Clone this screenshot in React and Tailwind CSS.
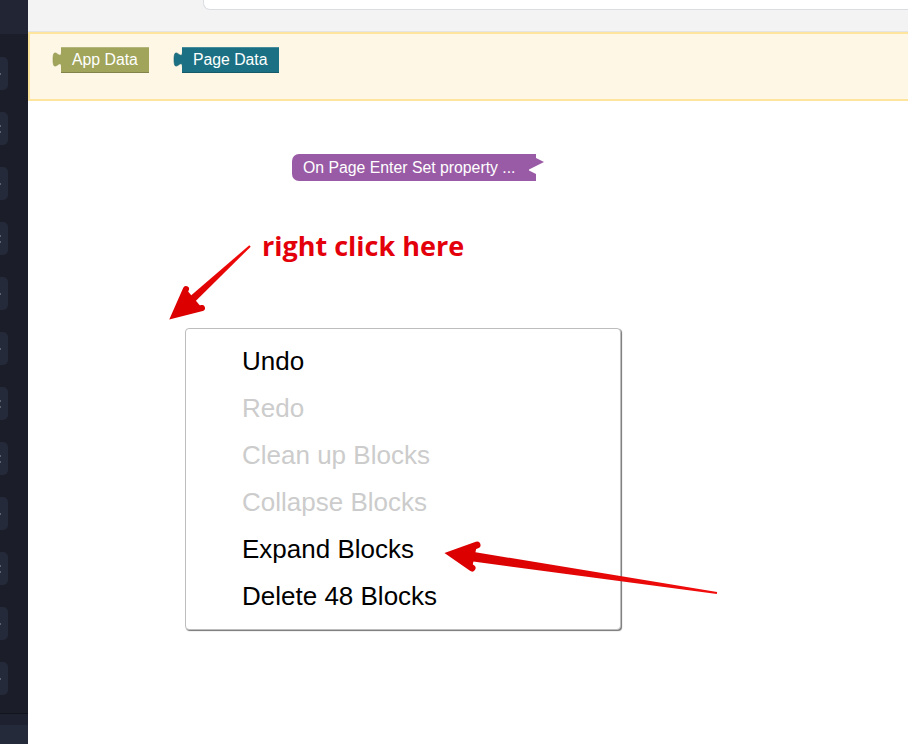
import React from "react";

const sideButtons = [1, 2, 1, 2, 1, 1, 2, 2, 1, 2, 1, 1];

const menuItems = [
  { label: "Undo", enabled: true },
  { label: "Redo", enabled: false },
  { label: "Clean up Blocks", enabled: false },
  { label: "Collapse Blocks", enabled: false },
  { label: "Expand Blocks", enabled: true },
  { label: "Delete 48 Blocks", enabled: true },
];

const OutputTab = ({ color, stroke }) => (
  <svg width="9" height="26" viewBox="0 0 9 26" className="block">
    <path d="M9.5 5 C9 15 1 -3 1 12.5 C1 28 9 10 9.5 20 Z" fill={color} stroke={stroke} strokeWidth="0.6" />
  </svg>
);

const DataBlock = ({ label, color, stroke }) => (
  <div className="flex items-start">
    <OutputTab color={color} stroke={stroke} />
    <div
      className="h-[26px] flex items-center pl-[11px] pr-[11px] text-white text-[15.8px] border-t border-t-white/20 border-b border-b-black/20"
      style={{ backgroundColor: color }}
    >
      {label}
    </div>
  </div>
);

const Sidebar = () => (
  <div className="w-[28px] h-full flex flex-col bg-[#1b1e29] shrink-0">
    <div className="h-[34px] bg-[#222634] shrink-0" />
    <div className="flex flex-col gap-[22px] pt-[23px]">
      {sideButtons.map((n, i) => (
        <div key={i} className="w-[8px] h-[33px] rounded-r-[5px] bg-[#252a3a] flex flex-col justify-center gap-[4px]">
          {Array.from({ length: n }).map((_, j) => (
            <div key={j} className="w-[1px] h-[2px] bg-[#5d626e]" />
          ))}
        </div>
      ))}
    </div>
    <div className="flex-1" />
    <div className="h-[1px] bg-[#12141c]" />
    <div className="h-[11px] bg-[#1e2230]" />
    <div className="h-[19px] bg-[#252a3a]" />
  </div>
);

const Arrows = () => (
  <svg className="absolute left-0 top-0 pointer-events-none" width="908" height="744">
    <defs>
      <linearGradient id="g1" x1="250" y1="246" x2="172" y2="318" gradientUnits="userSpaceOnUse">
        <stop offset="0" stopColor="#f10a0a" />
        <stop offset="1" stopColor="#d60000" />
      </linearGradient>
      <linearGradient id="g2" x1="717" y1="593" x2="447" y2="550" gradientUnits="userSpaceOnUse">
        <stop offset="0" stopColor="#f20d0d" />
        <stop offset="1" stopColor="#d60000" />
      </linearGradient>
    </defs>
    {/* arrow toward the canvas */}
    <polygon points="250.7,246.7 249.3,245.3 184,301.5 189.4,307.3" fill="url(#g1)" />
    <path d="M186 289 L174.5 315 L202 308" fill="#dc0000" stroke="#dc0000" strokeWidth="6" strokeLinecap="round" strokeLinejoin="miter" />
    {/* arrow toward Expand Blocks */}
    <polygon points="463.5,550.3 462.1,560.1 716.9,594 717.1,592" fill="url(#g2)" />
    <path d="M477 545 L452 554 L472 568" fill="#dc0000" stroke="#dc0000" strokeWidth="7" strokeLinecap="round" strokeLinejoin="miter" />
  </svg>
);

export default function App() {
  return (
    <div className="relative w-[908px] h-[744px] flex overflow-hidden bg-white font-['Liberation_Sans',Arial,sans-serif]">
      <Sidebar />
      <div className="flex-1 flex flex-col min-w-0">
        <div className="h-[32px] bg-[#f3f3f3] border-b border-[#e4e4e4] shrink-0 pl-[175px]">
          <div className="h-[10px] bg-white border-l border-b border-[#dadde2] rounded-bl-[7px]" />
        </div>
        <div className="h-[69px] bg-[#fef7e5] border-2 border-r-0 border-[#fde59d] shrink-0 flex items-start gap-[24px] pt-[13px] pl-[22px]">
          <DataBlock label="App Data" color="#a0a55b" stroke="#8e944c" />
          <DataBlock label="Page Data" color="#1b7183" stroke="#135f6f" />
        </div>
        <div className="relative flex-1">
          <div className="absolute left-[264px] top-[53px] flex items-start">
            <div className="h-[27px] flex items-center pl-[11px] pr-[13px] rounded-l-[7px] bg-[#995ba5] text-white text-[15.8px]">
              On Page Enter Set property ...
            </div>
            <svg width="16" height="27" viewBox="0 0 16 27" className="block -ml-px">
              <path d="M0 0 H8 V4 L16 8 L0 16 L8 20 V27 H0 Z" fill="#995ba5" />
            </svg>
          </div>

          <div className="absolute left-[234px] top-[130px] leading-[30px] text-[27px] font-bold text-[#e4000b] font-['Open_Sans',sans-serif] whitespace-nowrap">
            right click here
          </div>

          <div className="absolute left-[157px] top-[227px] w-[436px] bg-white border border-[#bdbdbd] rounded-[4px] shadow-[1px_1px_1px_rgba(0,0,0,0.55)] pt-[9px] pb-[9px] pl-[56px]">
            {menuItems.map((item) => (
              <div
                key={item.label}
                className={`h-[47px] leading-[47px] text-[26px] ${item.enabled ? "text-black" : "text-[#cccccc]"}`}
              >
                {item.label}
              </div>
            ))}
          </div>
        </div>
      </div>
      <Arrows />
    </div>
  );
}
